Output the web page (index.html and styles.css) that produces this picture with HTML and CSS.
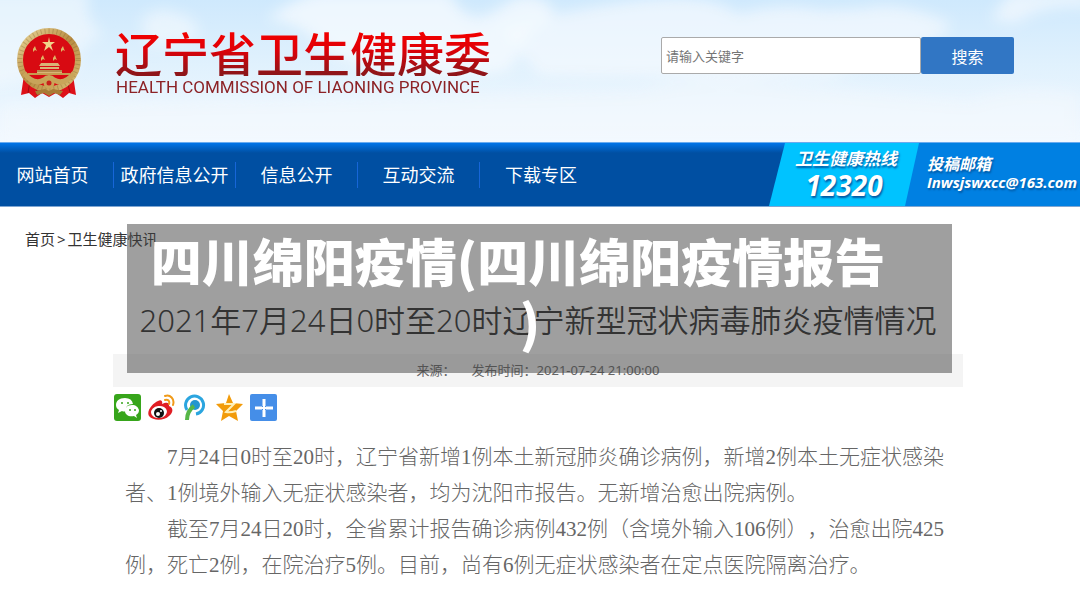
FILE: index.html
```html
<!DOCTYPE html>
<html lang="zh-CN">
<head>
<meta charset="utf-8">
<title>辽宁省卫生健康委</title>
<link rel="stylesheet" href="styles.css">
</head>
<body>
<header class="header">
  <svg class="sky" viewBox="0 0 1080 142" preserveAspectRatio="none" aria-hidden="true">
    <defs>
      <filter id="soft" x="-20%" y="-40%" width="140%" height="180%"><feGaussianBlur stdDeviation="7"/></filter>
      <linearGradient id="fade" x1="0" y1="0" x2="0" y2="1"><stop offset="0" stop-color="#cfe9fd"/><stop offset=".45" stop-color="#e0f1fd"/><stop offset="1" stop-color="#f2f9ff"/></linearGradient>
    </defs>
    <rect width="1080" height="142" fill="url(#fade)"/>
    <g fill="#f5fafe" filter="url(#soft)">
      <path opacity=".6" d="M-20-10H90Q82 20 104 34Q70 52 76 72L-20 90Z"/>
      <path opacity=".6" d="M140 22Q155 4 174 12Q206 20 196 40L150 48Z"/>
      <path opacity=".8" d="M266 20Q290 0 320-8H450Q456 12 478 18Q496 12 508 2Q530-12 552 6Q558 20 532 30L510 70Q420 90 330 54Q300 20 266 20Z"/>
      <path opacity=".7" d="M500 30Q560 10 640 0Q700-6 724 6L740 14Q780 2 820 10Q850 10 868 8Q900 0 952 24Q940 44 900 50L830 78L540 76Z"/>
      <path opacity=".7" d="M990 20L1010-8H1090V8Q1040 4 1016 24Z"/>
      <path opacity=".5" d="M640 90Q700 70 790 84L970 100Q1020 80 1080 94V142H0V104Z"/>
    </g>
  </svg>
  <a class="brand" href="#">
    <svg class="emblem" viewBox="0 0 66 72" aria-hidden="true">
      <defs><linearGradient id="gold" x1="0" y1="0" x2="1" y2="1"><stop offset="0" stop-color="#e9d79b"/><stop offset=".5" stop-color="#b98d42"/><stop offset="1" stop-color="#d9bd75"/></linearGradient></defs>
      <path d="M8 48L5 68L13 66L19 71L26 66L33 70L40 66L47 71L53 66L60 68L57 48Z" fill="#dd1018"/>
      <path d="M14 54L12 66M20 58L21 68M51 54L54 65M45 58L44 68" stroke="#9c0c10" fill="none"/>
      <circle cx="33" cy="33" r="29" fill="#d80a12" stroke="url(#gold)" stroke-width="6"/>
      <circle cx="33" cy="33" r="29" fill="none" stroke="#7c5a25" stroke-width="5" stroke-dasharray="1 3" opacity=".3"/>
      <path d="M33 10L34 15H39L35 18L37 24L33 20L28 24L30 18L26 15H32Z" fill="#f0d48b"/>
      <g fill="#dfb464"><path id="star" d="M19 19L20 22L21 24L19 23L17 25V22Z"/><use href="#star" x="28"/><use href="#star" x="8" y="9"/><use href="#star" x="20" y="9"/></g>
      <path d="M25 36H42L44 39H23ZM24 40H43V42H24ZM21 43H46V47H21Z" fill="#d9b477"/>
      <path d="M21 44H46" stroke="#926126"/>
      <path d="M12 47H54" stroke="#c59b50" stroke-width="2"/>
      <path d="M8 46Q18 59 28 53Q33 48 38 53Q48 59 58 46" fill="none" stroke="#c8a45a" stroke-width="5"/>
      <circle cx="33" cy="56" r="4" fill="#c8201a" stroke="#caa457" stroke-width="3"/>
      <path d="M19 64L29 62L33 64L37 62L47 64L44 68L38 66L33 69L28 66L21 68Z" fill="#a87b35"/>
    </svg>
    <span class="brand-text">
      <span class="brand-name">辽宁省卫生健康委</span>
      <span class="brand-en">HEALTH COMMISSION OF LIAONING PROVINCE</span>
    </span>
  </a>
  <form class="search">
    <input class="search-box" type="text" placeholder="请输入关键字" aria-label="请输入关键字">
    <button class="search-button" type="button">搜索</button>
  </form>
</header>
<nav class="nav">
  <ul class="menu">
    <li><a href="#">网站首页</a></li>
    <li><a href="#">政府信息公开</a></li>
    <li><a href="#">信息公开</a></li>
    <li><a href="#">互动交流</a></li>
    <li><a href="#">下载专区</a></li>
  </ul>
  <div class="contact">
    <div class="hotline"><span class="hotline-label">卫生健康热线</span><span class="hotline-number">12320</span></div>
    <div class="mail"><span class="mail-label">投稿邮箱</span><span class="mail-address">Inwsjswxcc@163.com</span></div>
  </div>
</nav>
<main class="page">
  <div class="crumbs"><a href="#">首页</a><span>&gt;</span><a href="#">卫生健康快讯</a></div>
  <article class="article">
    <h1 class="title">2021年7月24日0时至20时辽宁新型冠状病毒肺炎疫情情况</h1>
    <div class="meta"><span>来源：</span><span>发布时间：2021-07-24 21:00:00</span></div>
    <div class="share">
      <a href="#" aria-label="微信"><svg viewBox="0 0 27 27"><rect width="27" height="27" rx="3" fill="#37a51b"/><path d="M11 4C5 4 2 7 2 11C2 13 3 15 5 16L4 19L8 17Q10 18 12 17Q11 10 19 10Q18 4 11 4Z" fill="#fff"/><path d="M18 11C13 11 11 14 11 17C11 21 15 23 20 22L23 24L22 21C24 20 25 18 25 16C24 13 22 11 18 11Z" fill="#fff"/><g fill="#37a51b"><circle cx="8" cy="9" r="1"/><circle cx="14" cy="9" r="1"/><circle cx="16" cy="16" r="1"/><circle cx="21" cy="16" r="1"/></g></svg></a>
      <a href="#" aria-label="微博"><svg viewBox="0 0 27 27"><path d="M10 7C13 5 15 7 14 10C18 8 22 8 21 12C26 14 25 19 21 22C16 27 5 27 1 22C-2 17 5 9 10 7Z" fill="#e01e24"/><ellipse cx="11" cy="18" rx="8" ry="6" fill="#fff" transform="rotate(-8 11 18)"/><circle cx="11" cy="19" r="5" fill="#111"/><circle cx="10" cy="20" r="2" fill="#fff"/><circle cx="13" cy="17" r="1" fill="#fff"/><path d="M17 2C22 0 27 5 25 11M17 6C20 5 22 7 21 10" fill="none" stroke="#f09a19" stroke-width="2" stroke-linecap="round"/></svg></a>
      <a href="#" aria-label="腾讯微博"><svg viewBox="0 0 27 27"><path d="M5 16A9 9 0 1 1 14 20" fill="none" stroke="#2ba5df" stroke-width="3"/><circle cx="13" cy="11" r="5" fill="#2496cf"/><path d="M12 12Q5 17 5 26" fill="none" stroke="#56b648" stroke-width="4"/></svg></a>
      <a href="#" aria-label="QQ空间"><svg viewBox="0 0 27 27"><path d="M13 0L17 9L27 10L20 17L22 27L13 22L5 27L7 17L0 10L10 9Z" fill="#f29b0a"/><path d="M8 10H18L10 18Q14 19 20 17" fill="none" stroke="#fff0b8" stroke-width="2"/></svg></a>
      <a href="#" aria-label="更多分享"><svg viewBox="0 0 27 27"><rect width="27" height="27" rx="2" fill="#458ee8"/><path d="M14 5V12M14 16V23M5 14H12M16 14H23" stroke="#fff" stroke-width="3"/><path d="M14 11V17M11 14H17" stroke="#fff" stroke-width="2"/></svg></a>
    </div>
    <div class="body-text">
      <p>7月24日0时至20时，辽宁省新增1例本土新冠肺炎确诊病例，新增2例本土无症状感染者、1例境外输入无症状感染者，均为沈阳市报告。无新增治愈出院病例。</p>
      <p>截至7月24日20时，全省累计报告确诊病例432例（含境外输入106例），治愈出院425例，死亡2例，在院治疗5例。目前，尚有6例无症状感染者在定点医院隔离治疗。</p>
    </div>
  </article>
  <div class="banner"><span>四川绵阳疫情(四川绵阳疫情报告</span><span class="banner-end">)</span></div>
</main>
</body>
</html>
```
FILE: styles.css
```css
* { box-sizing: border-box; }
body { margin: 0; background: #fff; color: #333; font-family: "Noto Sans", "Noto Sans CJK SC", sans-serif; }
a { color: inherit; text-decoration: none; }

.header { position: relative; display: flex; justify-content: space-between; align-items: flex-start; min-height: 142px; padding: 0 66px 0 16px; }
.sky { position: absolute; inset: 0; width: 100%; height: 100%; }
.brand { position: relative; display: flex; gap: 33px; padding-top: 27px; }
.emblem { width: 66px; height: 72px; }
.brand-text { display: flex; flex-direction: column; gap: 2px; }
.brand-name { font: 500 47px/49px "Noto Sans CJK SC", sans-serif; background: linear-gradient(#f00000 15%, #e00008 45%, #8e1519 95%); background-clip: text; -webkit-background-clip: text; color: transparent; }
.brand-en { padding-left: 1px; font: 17px/19px Roboto, sans-serif; color: #8c2226; white-space: nowrap; }

.search { position: relative; display: flex; width: 353px; height: 37px; margin-top: 37px; }
.search-box { flex: 1; min-width: 0; padding: 0 4px; border: 1px solid #aaa; border-radius: 2px; background: #fff; font: 13px "Noto Sans CJK SC", sans-serif; color: #333; }
.search-box::placeholder { color: #757575; }
.search-button { width: 93px; padding: 0; border: 0; border-radius: 2px; background: #3176c4; color: #fff; font: 16px "Noto Sans CJK SC", sans-serif; }

.nav { display: flex; justify-content: space-between; height: 65px; overflow: hidden; border-top: 1px solid #69abef; border-bottom: 1px solid #7fa6d2; background: linear-gradient(#0074e8, #004fa2 10px); color: #fff; }
.menu { display: flex; align-items: center; margin: 0 0 0 -8px; padding: 0; list-style: none; }
.menu li { width: 122px; text-align: center; font-size: 18px; line-height: 26px; white-space: nowrap; border-right: 1px solid #1766d8; }
.menu li:last-child { border-right: 0; }
.contact { display: flex; width: 311px; background: linear-gradient(102deg, transparent 50px, #0080e2 50px); font-family: "Open Sans", "Noto Sans CJK SC", sans-serif; font-weight: 700; font-style: italic; text-shadow: 1px 2px 2px #0059a5; }
.hotline { display: flex; flex-direction: column; align-items: center; width: 150px; padding-top: 5px; background: #00c3ff; clip-path: polygon(16px 0, 100% 0, 136px 100%, 0 100%); }
.hotline-label { padding-left: 4px; font-size: 17px; line-height: 22px; }
.hotline-number { font-size: 28px; line-height: 30px; }
.mail { display: flex; flex-direction: column; padding: 12px 0 0 8px; white-space: nowrap; }
.mail-label { font-size: 16px; line-height: 18px; }
.mail-address { font-size: 15px; line-height: 18px; }

.page { position: relative; padding: 0 117px 24px 113px; }
.crumbs { display: flex; gap: 2px; margin-left: -88px; padding-top: 21px; font-size: 15px; line-height: 22px; }
.title { margin: 0; padding-top: 48px; color: #262626; font-size: 31px; font-weight: 350; line-height: 44px; text-align: center; white-space: nowrap; }
.meta { display: flex; justify-content: center; gap: 16px; margin-top: 12px; background: #f4f4f4; color: #666; font-size: 13px; line-height: 33px; }
.share { display: flex; gap: 7px; padding: 7px 0 0 1px; }
.share a, .share svg { display: block; width: 27px; height: 27px; }
.body-text { padding: 18px 12px; color: #666; font: 300 21px/36px "Liberation Serif", "Noto Sans CJK SC", serif; text-spacing-trim: space-all; }
.body-text p { margin: 0; text-indent: 2em; }

.banner { position: absolute; top: 17px; left: 127px; right: 128px; display: flex; flex-direction: column; padding: 6px 43px 21px 0; background: rgba(64, 64, 64, .5); color: #fff; font: 900 51px/61px "Noto Sans CJK SC", sans-serif; text-align: center; white-space: nowrap; }
.banner-end { padding-left: 24px; }
```
